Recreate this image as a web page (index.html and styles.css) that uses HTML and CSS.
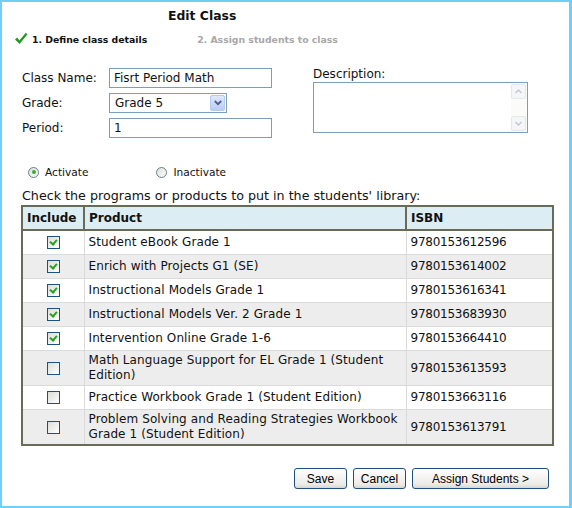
FILE: index.html
```html
<!DOCTYPE html>
<html>
<head>
<meta charset="utf-8">
<link rel="stylesheet" href="styles.css">
</head>
<body>
<div class="page">
  <div class="title">Edit Class</div>
  <div class="steps">
    <span class="step done">
      <svg class="tick" width="14" height="13" viewBox="0 0 14 13"><path d="M1 7.5 L3.2 5.6 L5.4 8.6 L11.8 0.8 L13.4 2.2 L5.6 12 Z" fill="#1f9a1f"/></svg>
      1. Define class details
    </span>
    <span class="step todo">2. Assign students to class</span>
  </div>

  <div class="form">
    <div class="fields">
      <label class="lbl">Class Name:</label>
      <input class="text" type="text" value="Fisrt Period Math">
      <label class="lbl">Grade:</label>
      <div class="select">
        <span class="sel-val">Grade 5</span>
        <span class="sel-btn"><svg width="8" height="6" viewBox="0 0 8 6"><path d="M0.8 1 L4 4.2 L7.2 1" fill="none" stroke="#4d6185" stroke-width="1.8"/></svg></span>
      </div>
      <label class="lbl">Period:</label>
      <input class="text" type="text" value="1">
    </div>
    <div class="desc">
      <label class="lbl">Description:</label>
      <div class="textarea">
        <div class="sb">
          <span class="sb-btn"><svg width="7" height="5" viewBox="0 0 7 5"><path d="M0.5 4 L3.5 1 L6.5 4" fill="none" stroke="#c2c8d0" stroke-width="1.4"/></svg></span>
          <span class="sb-btn"><svg width="7" height="5" viewBox="0 0 7 5"><path d="M0.5 1 L3.5 4 L6.5 1" fill="none" stroke="#c2c8d0" stroke-width="1.4"/></svg></span>
        </div>
      </div>
    </div>
  </div>

  <div class="radios">
    <span class="radio-item"><span class="radio on"></span>Activate</span>
    <span class="radio-item"><span class="radio"></span>Inactivate</span>
  </div>

  <p class="hint">Check the programs or products to put in the students' library:</p>

  <table class="grid">
    <thead>
      <tr><th class="c-inc">Include</th><th class="c-prod">Product</th><th class="c-isbn">ISBN</th></tr>
    </thead>
    <tbody>
      <tr><td class="c-inc"><span class="cb on"></span></td><td>Student eBook Grade 1</td><td class="isbn">9780153612596</td></tr>
      <tr class="alt"><td class="c-inc"><span class="cb on"></span></td><td>Enrich with Projects G1 (SE)</td><td class="isbn">9780153614002</td></tr>
      <tr><td class="c-inc"><span class="cb on"></span></td><td>Instructional Models Grade 1</td><td class="isbn">9780153616341</td></tr>
      <tr class="alt"><td class="c-inc"><span class="cb on"></span></td><td>Instructional Models Ver. 2 Grade 1</td><td class="isbn">9780153683930</td></tr>
      <tr><td class="c-inc"><span class="cb on"></span></td><td>Intervention Online Grade 1-6</td><td class="isbn">9780153664410</td></tr>
      <tr class="alt two"><td class="c-inc"><span class="cb"></span></td><td>Math Language Support for EL Grade 1 (Student Edition)</td><td class="isbn">9780153613593</td></tr>
      <tr><td class="c-inc"><span class="cb"></span></td><td>Practice Workbook Grade 1 (Student Edition)</td><td class="isbn">9780153663116</td></tr>
      <tr class="alt two"><td class="c-inc"><span class="cb"></span></td><td>Problem Solving and Reading Strategies Workbook Grade 1 (Student Edition)</td><td class="isbn">9780153613791</td></tr>
    </tbody>
  </table>

  <div class="actions">
    <button class="btn b-save">Save</button>
    <button class="btn b-cancel">Cancel</button>
    <button class="btn b-assign">Assign Students &gt;</button>
  </div>
</div>
</body>
</html>
```

FILE: styles.css
```css
html, body {
  margin: 0;
  padding: 0;
  background: #ffffff;
}
.page {
  box-sizing: border-box;
  width: 572px;
  height: 508px;
  border: 2px solid #70cff6;
  border-right-width: 3px;
  font-family: "DejaVu Sans", Verdana, sans-serif;
  font-size: 12px;
  color: #111;
}
.title {
  font-weight: bold;
  font-size: 12.4px;
  padding-left: 166px;
  padding-top: 6px;
  height: 19px;
  line-height: 16px;
}
.steps {
  display: flex;
  align-items: center;
  height: 16px;
  padding-left: 12px;
  margin-top: 4px;
  font-size: 9.3px;
  font-weight: bold;
}
.step { display: flex; align-items: center; }
.step.done { color: #111; }
.tick { margin-right: 4px; margin-top: -2px; }
.step.todo { color: #a8a8a8; margin-left: 50px; }

.form {
  display: flex;
  margin-top: 21px;
  padding-left: 20px;
}
.fields {
  display: grid;
  grid-template-columns: 87px 163px;
  row-gap: 5px;
  align-items: center;
}
.lbl { font-size: 12px; }
.text {
  box-sizing: border-box;
  width: 163px;
  height: 20px;
  border: 1px solid #7f9db9;
  padding: 0 4px;
  margin: 0;
  font: 12px "DejaVu Sans", Verdana, sans-serif;
  color: #111;
  outline: none;
}
.select {
  box-sizing: border-box;
  width: 118px;
  height: 20px;
  border: 1px solid #7f9db9;
  display: flex;
  align-items: center;
  justify-content: space-between;
  padding: 1px;
}
.sel-val { padding-left: 4px; }
.sel-btn {
  box-sizing: border-box;
  width: 15px;
  height: 16px;
  border: 1px solid #b7c9f1;
  border-radius: 2px;
  background: linear-gradient(#dfe9fd, #b8cdf8);
  display: flex;
  align-items: center;
  justify-content: center;
}
.desc {
  margin-left: 41px;
  margin-top: -1px;
  display: flex;
  flex-direction: column;
}
.textarea {
  box-sizing: border-box;
  width: 215px;
  height: 51px;
  margin-top: 1px;
  border: 1px solid #7f9db9;
  display: flex;
  justify-content: flex-end;
}
.sb {
  width: 16px;
  display: flex;
  flex-direction: column;
  justify-content: space-between;
  background: #fbfbf9;
  padding: 1px 0;
}
.sb-btn {
  box-sizing: border-box;
  width: 15px;
  height: 15px;
  border: 1px solid #e4e7ec;
  border-radius: 2px;
  background: #f5f6f8;
  display: flex;
  align-items: center;
  justify-content: center;
}

.radios {
  display: flex;
  margin-top: 27px;
  padding-left: 26px;
  height: 14px;
  align-items: center;
}
.radio-item { display: flex; align-items: center; font-size: 10.6px; }
.radio-item + .radio-item { margin-left: 68px; }
.radio {
  box-sizing: border-box;
  width: 11px;
  height: 11px;
  border-radius: 50%;
  border: 1px solid #6b7d8f;
  background: linear-gradient(135deg, #dcdcd6, #fff);
  margin-right: 6px;
  position: relative;
}
.radio.on::after {
  content: "";
  position: absolute;
  left: 2.5px;
  top: 2.5px;
  width: 4px;
  height: 4px;
  border-radius: 50%;
  background: #2bb52b;
}

.hint {
  margin: 9px 0 0 20px;
  font-size: 12.7px;
  line-height: 15px;
}

.grid {
  margin: 2px 0 0 19px;
  border-collapse: collapse;
  width: 533px;
  border: 2px solid #6a6a58;
  font-size: 12px;
}
.grid th {
  background: #dcedf3;
  border: 2px solid #6a6a58;
  text-align: left;
  font-weight: bold;
  height: 22px;
  padding: 0 4px;
}
.grid td {
  border: 1px solid #dadada;
  padding: 0 4px;
  height: 23px;
  line-height: 15px;
  letter-spacing: 0.1px;
}
.grid td.isbn { letter-spacing: -0.25px; }
.grid tr.alt td { background: #ededed; }
.grid tr.two td { padding-top: 2px; padding-bottom: 2px; }
.c-inc { width: 52px; text-align: center; }
.grid td.c-inc { text-align: center; }
.c-prod { width: 312px; }
.cb {
  display: inline-block;
  box-sizing: border-box;
  width: 13px;
  height: 13px;
  border: 1px solid #1d5180;
  background: linear-gradient(135deg, #dcdcd7, #fff);
  vertical-align: middle;
  position: relative;
}
.cb.on::after {
  content: "";
  position: absolute;
  left: 3px;
  top: 1px;
  width: 3px;
  height: 5px;
  border: solid #21a121;
  border-width: 0 2px 2px 0;
  transform: rotate(40deg);
}

.actions {
  display: flex;
  justify-content: flex-end;
  gap: 6px;
  margin-top: 22px;
  padding-right: 20px;
}
.btn {
  box-sizing: border-box;
  height: 21px;
  border: 1px solid #1f4f83;
  border-radius: 3px;
  background: linear-gradient(#ffffff, #ecebe6 80%, #d8d6cf);
  font: 12px "Liberation Sans", Arial, sans-serif;
  color: #000;
  padding: 0;
}
.b-save { width: 53px; }
.b-cancel { width: 53px; }
.b-assign { width: 137px; }
```
